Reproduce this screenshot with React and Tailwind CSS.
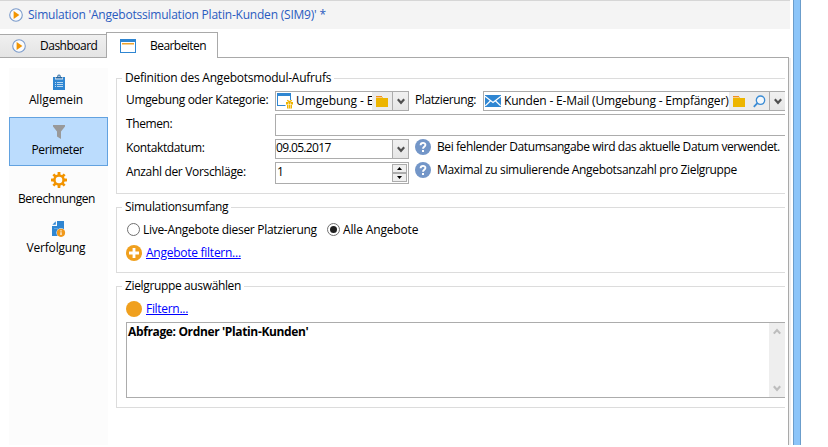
import React from "react";

const PlayIcon = () => (
  <svg width="14" height="14" viewBox="0 0 14 14" className="block shrink-0">
    <circle cx="7" cy="7" r="6.3" fill="#fbfbfb" stroke="#7b9bcb" strokeWidth="1.1" />
    <path d="M4.6 2.9 L10.4 7 L4.6 11.1 Z" fill="#f29400" />
  </svg>
);

const WindowIcon = () => (
  <svg width="16" height="14" viewBox="0 0 16 14" className="block shrink-0">
    <rect width="16" height="14" fill="#2f86d2" />
    <rect x="1" y="3" width="14" height="10" fill="#fff" />
    <rect x="2" y="4" width="12" height="1.5" fill="#f0a32c" />
  </svg>
);

const ClipboardIcon = () => (
  <svg width="12" height="16" viewBox="0 0 12 16" className="block">
    <rect y="3" width="12" height="13" fill="#2f86d2" />
    <rect x="2" y="3" width="8" height="2.4" fill="#fff" />
    <path d="M2.5 4.6 V3 H4.2 A1.8 2.4 0 0 1 7.8 3 H9.5 V4.6 Z" fill="#24659f" />
    <rect x="5.4" y="1.6" width="1.2" height="1.4" fill="#fff" />
    <path d="M2 8.5 h1 M4 8.5 h6 M2 10.5 h1 M4 10.5 h6 M2 12.5 h1 M4 12.5 h6" stroke="#b8d8f2" />
  </svg>
);

const FunnelIcon = () => (
  <svg width="12" height="14" viewBox="0 0 12 14" className="block">
    <path d="M0 0 H12 V1.5 L8 6.5 V14 L4 11.5 V6.5 L0 1.5 Z" fill="#999" />
  </svg>
);

const GearIcon = () => (
  <svg width="16" height="16" viewBox="0 0 16 16" className="block">
    <g fill="#f29400">
      {[0, 45, 90, 135].map((a) => (
        <rect key={a} x="6.6" y="0" width="2.8" height="16" rx=".4" transform={`rotate(${a} 8 8)`} />
      ))}
      <circle cx="8" cy="8" r="5.8" />
    </g>
    <circle cx="8" cy="8" r="3.3" fill="#fcfcfc" />
  </svg>
);

const ReportIcon = () => (
  <svg width="14" height="16" viewBox="0 0 14 16" className="block">
    <path d="M5 0 H12 V15 H0 V5 H5 Z" fill="#2f86d2" />
    <path d="M0.3 3.8 L3.8 0.3 V3.8 Z" fill="#2f86d2" />
    <path d="M2 7.5 h4" stroke="#5fa3dd" />
    <circle cx="9" cy="11.8" r="4.6" fill="#fcfcfc" />
    <circle cx="9" cy="11.8" r="4.1" fill="#f0981a" />
    <path d="M9 11.2 v2.8 M9 9.2 v1.2" stroke="#fff" strokeWidth="1.2" />
  </svg>
);

const GiftWindowIcon = () => (
  <svg width="17" height="16" viewBox="0 0 17 16" className="block shrink-0">
    <path d="M0 0 H14 V7 H13 V3 H1 V12 H8.5 V13 H0 Z" fill="#2f86d2" />
    <path d="M9 9 h7 v2.6 h-7 Z M10 12 h5 v3.5 h-5 Z" fill="#efb400" />
    <path d="M10.2 7.2 l2.3 1.6 2.3-1.6" fill="none" stroke="#efb400" strokeWidth="1.4" />
    <path d="M11.5 9.5 v6 M13.5 9.5 v6" stroke="#fff" strokeWidth=".5" />
  </svg>
);

const FolderIcon = () => (
  <svg width="12" height="11" viewBox="0 0 12 11" className="block shrink-0">
    <path d="M0 0 H5.5 L7 2 H12 V11 H0 Z" fill="#edb500" />
    <rect width="6" height="1" fill="#f0901e" />
    <rect x="0" y="1" width="6" height="1" fill="#f7c98a" />
  </svg>
);

const MailIcon = () => (
  <svg width="16" height="12" viewBox="0 0 16 12" className="block shrink-0">
    <rect width="16" height="12" fill="#2f86d2" />
    <path d="M0 1.2 L8 7.4 L16 1.2 M0.3 10.8 L5.6 5.8 M15.7 10.8 L10.4 5.8" fill="none" stroke="#fff" strokeWidth="1.2" />
  </svg>
);

const SearchIcon = () => (
  <svg width="13" height="13" viewBox="0 0 13 13" className="block shrink-0">
    <circle cx="7.5" cy="5.2" r="4.2" fill="#f3f8fc" stroke="#3a8bd4" strokeWidth="1.3" />
    <path d="M4.4 8.2 L0.8 11.8" stroke="#3a8bd4" strokeWidth="1.8" />
  </svg>
);

const HelpIcon = () => (
  <svg width="16" height="16" viewBox="0 0 16 16" className="block shrink-0">
    <circle cx="8" cy="8" r="8" fill="#7396c8" />
    <path d="M5.6 6.3 C5.6 3 10.6 3.2 10.4 6 C10.3 7.7 8 7.9 8 9.8" fill="none" stroke="#fff" strokeWidth="1.9" />
    <rect x="7" y="11" width="2" height="2" fill="#fff" />
  </svg>
);

const PlusIcon = () => (
  <svg width="16" height="16" viewBox="0 0 16 16" className="block shrink-0">
    <circle cx="8" cy="8" r="8" fill="#f0a01e" />
    <path d="M8 3 V13 M3 8 H13" stroke="#fff" strokeWidth="2.8" />
  </svg>
);

const Chevron = ({ up = false, color = "#505050" }) => (
  <svg width="8" height="7" viewBox="0 0 8 7" className="block shrink-0">
    <path d={up ? "M.8 5.6 L4 2 L7.2 5.6" : "M.8 1.2 L4 4.8 L7.2 1.2"} fill="none" stroke={color} strokeWidth="2.1" />
  </svg>
);

const DropButton = ({ open = false }) => (
  <div
    className={`flex shrink-0 items-center justify-center border border-[#acacac] bg-linear-to-b from-[#f1f1f1] to-[#e6e6e6] ${open ? "w-4 border-r-0" : "w-[17px]"}`}
  >
    <Chevron />
  </div>
);

const Group = ({ title, titleClass, className, children }) => (
  <fieldset className={`min-w-0 border border-r-0 border-[#dcdcdc] ${className}`}>
    <legend className={`ml-[5px] h-4 px-[3px] leading-4 whitespace-nowrap ${titleClass}`}>{title}</legend>
    {children}
  </fieldset>
);

const Row = ({ label, labelClass, className, children }) => (
  <div className={`flex ${className}`}>
    <div className={`w-[149px] shrink-0 whitespace-nowrap ${labelClass}`}>{label}</div>
    {children}
  </div>
);

const SideItem = ({ icon, label, className, textClass }) => (
  <div className={`flex h-[49px] flex-col items-center justify-between ${className}`}>
    {icon}
    <span className={`leading-4 whitespace-nowrap ${textClass}`}>{label}</span>
  </div>
);

export default function App() {
  return (
    <div className="flex h-[447px] w-[828px] overflow-hidden bg-white font-['Open_Sans','Noto_Sans',sans-serif] text-[12px] text-black">
      <div className="flex h-[445px] w-[793px] shrink-0 flex-col">
        <header className="flex h-[29px] w-[790px] shrink-0 items-center gap-[5px] border-t border-[#d6d6d6] bg-[#f4f4f4] pl-[9px]">
          <PlayIcon />
          <span className="tracking-[-0.21px] whitespace-nowrap text-[#2a5bc0]">
            Simulation 'Angebotssimulation Platin-Kunden (SIM9)' *
          </span>
        </header>

        <nav className="flex h-[29px] w-[789px] shrink-0 items-end pt-[3px]">
          <div className="flex h-[24px] w-[106px] items-center gap-[14px] border-y border-[#a9a9a9] bg-linear-to-b from-[#f0f0f0] to-[#e4e4e4] pl-[12px]">
            <PlayIcon />
            <span className="tracking-[-0.5px]">Dashboard</span>
          </div>
          <div className="flex h-[26px] w-[112px] items-center gap-[14px] border border-b-0 border-[#a9a9a9] bg-white pl-[13px]">
            <WindowIcon />
            <span className="tracking-[-0.55px]">Bearbeiten</span>
          </div>
          <div className="h-px flex-1 bg-[#a9a9a9]" />
        </nav>

        <div className="flex min-h-0 flex-1">
          <div className="flex w-[789px] border-r border-[#a9a9a9]">
            <aside className="mt-[10px] ml-[9px] w-[99px] shrink-0 bg-[#fcfcfc]">
              <SideItem icon={<ClipboardIcon />} label="Allgemein" className="pt-[6px]" textClass="mb-[9px] mr-[5px] tracking-[-0.1px]" />
              <SideItem icon={<FunnelIcon />} label="Perimeter" className="border border-[#62a2e0] bg-[#bbdcfd] pt-[7px]" textClass="mb-[7px] mr-[2px] tracking-[-0.4px]" />
              <SideItem icon={<GearIcon />} label="Berechnungen" className="pt-[6px]" textClass="mb-[8px] mr-[4px] tracking-[-0.4px]" />
              <SideItem icon={<ReportIcon />} label="Verfolgung" className="pt-[6px]" textClass="mb-[8px] mr-[5px] tracking-[-0.2px]" />
            </aside>

            <main className="mt-[12px] ml-[8px] w-[669px]">
              <Group title="Definition des Angebotsmodul-Aufrufs" className="h-[124px]" titleClass="tracking-[-0.23px]">
                <div className="flex flex-col gap-[3px] pt-[5px] pl-[9px]">
                  <Row label="Umgebung oder Kategorie:" className="h-5" labelClass="leading-[18px] tracking-[-0.35px]">
                    <div className="flex w-[134px] shrink-0">
                      <div className="flex min-w-0 flex-1 items-center border border-r-0 border-[#acacac] pl-[1px]">
                        <GiftWindowIcon />
                        <span className="ml-[2px] min-w-0 flex-1 tracking-[-0.1px] whitespace-nowrap">Umgebung - E</span>
                        <div className="flex h-full w-5 shrink-0 items-center justify-center bg-[#ececec]">
                          <FolderIcon />
                        </div>
                      </div>
                      <DropButton />
                    </div>
                    <div className="ml-[6px] w-[68px] shrink-0 leading-[18px] tracking-[-0.4px] whitespace-nowrap">Platzierung:</div>
                    <div className="flex min-w-0 flex-1">
                      <div className="flex min-w-0 flex-1 items-center border border-r-0 border-[#acacac] pl-[1px]">
                        <MailIcon />
                        <span className="ml-[3px] min-w-0 flex-1 tracking-[-0.17px] whitespace-nowrap">Kunden - E-Mail (Umgebung - Empfänger)</span>
                        <div className="flex h-full w-10 shrink-0 items-center gap-[8px] bg-[#ececec] pl-[4px]">
                          <FolderIcon />
                          <SearchIcon />
                        </div>
                      </div>
                      <DropButton open />
                    </div>
                  </Row>
                  <Row label="Themen:" className="h-[22px]" labelClass="leading-5 tracking-[-0.4px]">
                    <div className="flex-1 border border-r-0 border-[#acacac]" />
                  </Row>
                  <Row label="Kontaktdatum:" className="h-5" labelClass="leading-[18px] tracking-[-0.38px]">
                    <div className="flex w-[134px] shrink-0">
                      <div className="flex-1 border border-r-0 border-[#acacac] leading-4 tracking-[-0.65px]">09.05.2017</div>
                      <DropButton />
                    </div>
                    <div className="ml-[6px]"><HelpIcon /></div>
                    <span className="ml-[6px] leading-4 tracking-[-0.41px] whitespace-nowrap">
                      Bei fehlender Datumsangabe wird das aktuelle Datum verwendet.
                    </span>
                  </Row>
                  <Row label="Anzahl der Vorschläge:" className="h-[22px]" labelClass="leading-5 tracking-[-0.33px]">
                    <div className="flex w-[134px] shrink-0 border border-[#acacac] p-px">
                      <div className="flex-1 leading-4">1</div>
                      <div className="flex w-[15px] flex-col">
                        <div className="flex h-[9px] items-center justify-center border border-[#acacac] bg-[#efefef]">
                          <svg width="5" height="3" viewBox="0 0 5 3"><path d="M0 3 L2.5 0 L5 3 Z" /></svg>
                        </div>
                        <div className="flex h-[9px] items-center justify-center border border-[#acacac] bg-[#efefef]">
                          <svg width="5" height="3" viewBox="0 0 5 3"><path d="M0 0 L2.5 3 L5 0 Z" /></svg>
                        </div>
                      </div>
                    </div>
                    <div className="ml-[6px]"><HelpIcon /></div>
                    <span className="ml-[6px] leading-4 tracking-[-0.34px] whitespace-nowrap">
                      Maximal zu simulierende Angebotsanzahl pro Zielgruppe
                    </span>
                  </Row>
                </div>
              </Group>

              <Group title="Simulationsumfang" className="mt-[5px] h-[74px]" titleClass="tracking-[-0.3px]">
                <div className="mt-[8px] flex h-[13px] items-center pl-[10px]">
                  <span className="h-[13px] w-[13px] shrink-0 rounded-full border border-[#707070] bg-white" />
                  <span className="ml-[3px] w-[184px] tracking-[-0.29px] whitespace-nowrap">Live-Angebote dieser Platzierung</span>
                  <span className="flex h-[13px] w-[13px] shrink-0 items-center justify-center rounded-full border border-[#707070] bg-white">
                    <span className="h-[7px] w-[7px] rounded-full bg-[#202020]" />
                  </span>
                  <span className="ml-[3px] tracking-[-0.15px] whitespace-nowrap">Alle Angebote</span>
                </div>
                <div className="mt-[9px] flex h-4 items-center gap-[4px] pl-[9px]">
                  <PlusIcon />
                  <a className="tracking-[-0.26px] whitespace-nowrap text-[#0000ff] underline">Angebote filtern...</a>
                </div>
              </Group>

              <Group title="Zielgruppe auswählen" className="mt-[5px] h-[130px]" titleClass="tracking-[-0.36px]">
                <div className="mt-[7px] flex h-4 items-center gap-[4px] pl-[9px]">
                  <span className="h-4 w-4 rounded-full bg-[#f0a01e]" />
                  <a className="tracking-[-0.3px] text-[#0000ff] underline">Filtern...</a>
                </div>
                <div className="mt-[5px] ml-[9px] flex h-[76px] border border-r-0 border-[#acacac]">
                  <div className="flex-1 pl-[1px] leading-[18px] font-bold tracking-[-0.36px]">Abfrage: Ordner 'Platin-Kunden'</div>
                  <div className="flex w-4 flex-col items-center justify-between bg-[#eeeeee] py-[5px]">
                    <Chevron up color="#bdbdbd" />
                    <Chevron color="#bdbdbd" />
                  </div>
                </div>
              </Group>
            </main>
          </div>
          <div className="w-[2px] bg-[#f0f0f0]" />
        </div>
      </div>
      <div className="h-[445px] w-2 shrink-0 border-x border-[#6b9dcb] bg-[#8cc5f9]" />
    </div>
  );
}
